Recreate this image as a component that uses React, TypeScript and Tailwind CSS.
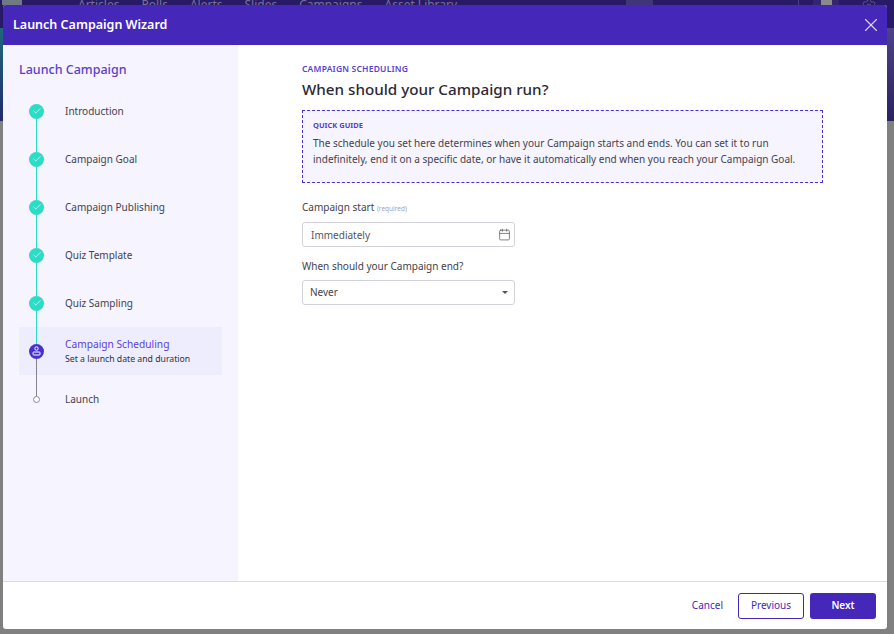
import { Calendar, Check, Settings, X } from 'lucide-react';

const steps = [
    { label: 'Introduction', state: 'done' },
    { label: 'Campaign Goal', state: 'done' },
    { label: 'Campaign Publishing', state: 'done' },
    { label: 'Quiz Template', state: 'done' },
    { label: 'Quiz Sampling', state: 'done' },
    { label: 'Campaign Scheduling', state: 'current', hint: 'Set a launch date and duration' },
    { label: 'Launch', state: 'todo' },
];

function StepDot({ state }: { state: string }) {
    if (state === 'done') {
        return (
            <span className="flex h-[15px] w-[15px] shrink-0 items-center justify-center rounded-full bg-[#2cdcc6]">
                <Check className="h-[10px] w-[10px] text-white" strokeWidth={1.5} />
            </span>
        );
    }
    if (state === 'current') {
        return (
            <span className="flex h-[15px] w-[15px] shrink-0 items-center justify-center rounded-full bg-[#4a2fd0]">
                <svg width="9" height="10" viewBox="0 0 9 10" fill="none" stroke="white" strokeWidth="1">
                    <circle cx="4.5" cy="2.5" r="1.7" />
                    <rect x="1" y="6" width="7" height="3" rx="0.8" />
                </svg>
            </span>
        );
    }
    return <span className="h-[7px] w-[7px] shrink-0 rounded-full border border-[#8b8b98] bg-white" />;
}

function Step({ step, index }: { step: (typeof steps)[number]; index: number }) {
    const current = step.state === 'current';
    const topLine = index === 0 ? 'bg-transparent' : step.state === 'todo' ? 'bg-[#85818f]' : 'bg-[#2cdcc6]';
    const bottomLine = step.state === 'done' ? 'bg-[#2cdcc6]' : current ? 'bg-[#85818f]' : 'bg-transparent';

    return (
        <div className={`flex h-12 items-center ${current ? 'bg-[#eeedfd]' : ''}`}>
            <div className="flex h-full w-[35px] shrink-0 flex-col items-center">
                <span className={`w-px flex-1 ${topLine}`} />
                <StepDot state={step.state} />
                <span className={`w-px flex-1 ${bottomLine}`} />
            </div>
            <div className={`pl-[11px] ${current ? 'mt-[1px]' : '-mt-[1px]'}`}>
                <p className={`leading-[14px] ${current ? 'text-[10.2px] text-[#5b3fe0]' : 'text-[10px] text-[#44424c]'}`}>{step.label}</p>
                {step.hint && <p className="mt-[2px] text-[8.7px] leading-[13px] text-[#33313a]">{step.hint}</p>}
            </div>
        </div>
    );
}

export default function App() {
    return (
        <div className="relative h-[634px] w-[894px] overflow-hidden bg-[#808080] font-['Noto_Sans',sans-serif]">
            {/* page behind the dialog, dimmed */}
            <div className="flex h-[28px] items-start bg-[#281a66] text-[12px] leading-[10px] text-[#77709a]">
                <span className="ml-[2px] h-[5px] w-[20px] shrink-0 bg-[#6f7a85]" />
                <nav className="ml-[56px] flex gap-[22px]">
                    <span>Articles</span>
                    <span>Polls</span>
                    <span>Alerts</span>
                    <span>Slides</span>
                    <span>Campaigns</span>
                    <span>Asset Library</span>
                </nav>
                <div className="ml-auto flex w-[268px] items-start">
                    <span className="h-[5px] w-[27px] bg-[#3f3578]" />
                    <span className="ml-[145px] h-[5px] w-px bg-[#4a4085]" />
                    <span className="ml-[14px] flex h-[5px] w-[26px] justify-center bg-[#33266f]">
                        <span className="h-[5px] w-[11px] bg-[#8a8a8a]" />
                    </span>
                    <Settings className="ml-[22px] -mt-[2px] h-[16px] w-[16px] text-[#77709a]" strokeWidth={1} />
                </div>
            </div>
            <div className="flex h-[93px] justify-between">
                <div className="w-[3px] bg-gradient-to-b from-[#1f6a7a] to-[#1f2a6a]" />
                <div className="w-[7px] bg-gradient-to-b from-[#4d4288] to-[#2b2260]" />
            </div>

            <div className="absolute left-[3px] top-[5px] flex h-[624px] w-[884px] flex-col overflow-hidden rounded-[3px] bg-white">
                <header className="flex h-10 shrink-0 items-center justify-between bg-[#4527ba] pl-[10px] pr-[5px]">
                    <h1 className="text-[12.5px] font-semibold text-white">Launch Campaign Wizard</h1>
                    <X className="h-[22px] w-[22px] text-[#dcd6f5]" strokeWidth={1.25} />
                </header>

                <div className="flex min-h-0 flex-1">
                    <aside className="w-[235px] shrink-0 bg-[#f6f4fe] px-4">
                        <h2 className="flex h-[35px] items-end pb-[2px] text-[12.5px] font-medium leading-4 text-[#5a40d0]">Launch Campaign</h2>
                        <div className="mt-[7px]">
                            {steps.map((step, i) => (
                                <Step key={step.label} step={step} index={i} />
                            ))}
                        </div>
                    </aside>

                    <main className="min-w-0 flex-1 px-[64px] pt-[18px]">
                        <p className="text-[8.5px] font-semibold uppercase leading-3 tracking-[0.2px] text-[#5a40d0]">Campaign Scheduling</p>
                        <h2 className="mt-[2px] text-[15.2px] font-medium leading-6 text-[#2b2933]">When should your Campaign run?</h2>
                        <section className="mt-[9px] h-[73px] border border-dashed border-[#4a2fe0] bg-[#f6f4fe] px-[10px] pt-[9px]">
                            <p className="text-[7.5px] font-bold uppercase leading-[10px] text-[#5a40d0]">Quick Guide</p>
                            <p className="mt-[6px] text-[10px] leading-[15.5px] text-[#44424c]">
                                The schedule you set here determines when your Campaign starts and ends. You can set it to run indefinitely, end it on a specific date, or have it automatically end when you reach your Campaign Goal.
                            </p>
                        </section>

                        <label className="mt-[12px] block text-[10px] leading-[24px] text-[#44424c]">
                            Campaign start <span className="text-[6.5px] text-[#a5a3ad]">(required)</span>
                        </label>
                        <div className="mt-[1px] flex h-[25px] w-[213px] items-center justify-between rounded-[3px] border border-[#d3d2d9] pl-2 pr-[3px] text-[10px] text-[#55535c]">
                            <span className="mt-[2px]">Immediately</span>
                            <Calendar className="h-[13px] w-[13px] text-[#4a4852]" strokeWidth={1.25} />
                        </div>

                        <label className="mt-[7px] block text-[10px] leading-[24px] text-[#44424c]">When should your Campaign end?</label>
                        <div className="mt-[2px] flex h-[25px] w-[213px] items-center justify-between rounded-[3px] border border-[#d3d2d9] pl-[7px] pr-[6px] text-[10px] text-[#44424c]">
                            <span>Never</span>
                            <span className="h-0 w-0 border-x-[3px] border-t-[3px] border-x-transparent border-t-[#55535c]" />
                        </div>
                    </main>
                </div>

                <footer className="flex h-[48px] shrink-0 items-center justify-end gap-[11px] border-t border-[#dcdbe0] pr-[11px]">
                    <button className="mr-[4px] text-[10px] text-[#4527ba]">Cancel</button>
                    <button className="h-[26px] w-[66px] rounded-[3px] border border-[#4527ba] text-[10px] text-[#4527ba]">Previous</button>
                    <button className="-ml-[5px] h-[26px] w-[66px] rounded-[3px] bg-[#4527ba] text-[10px] font-semibold text-white">Next</button>
                </footer>
            </div>
        </div>
    );
}
